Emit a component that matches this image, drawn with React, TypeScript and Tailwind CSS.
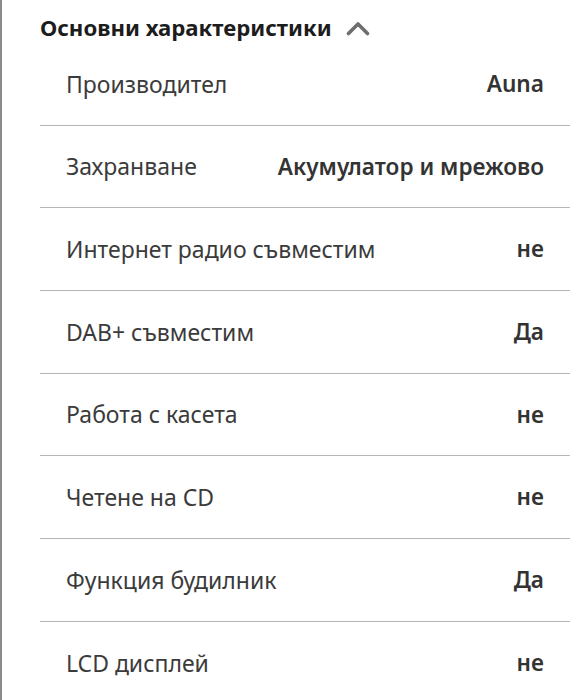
import React from "react"

type Spec = { label: string; value: string }

const specs: Spec[] = [
  { label: "Производител", value: "Auna" },
  { label: "Захранване", value: "Акумулатор и мрежово" },
  { label: "Интернет радио съвместим", value: "не" },
  { label: "DAB+ съвместим", value: "Да" },
  { label: "Работа с касета", value: "не" },
  { label: "Четене на CD", value: "не" },
  { label: "Функция будилник", value: "Да" },
  { label: "LCD дисплей", value: "не" },
]

const ChevronUp: React.FC = () => (
  <svg width="24" height="15" viewBox="0 0 24 15" fill="none">
    <path d="M2.5 12.5 L12 3 L21.5 12.5" stroke="#6e6e6e" strokeWidth="3.6" strokeLinecap="round" strokeLinejoin="round" />
  </svg>
)

const App: React.FC = () => {
  return (
    <div className="w-[587px] h-[700px] overflow-hidden bg-white border-l-2 border-[#8a8a8a] font-['Noto_Sans',sans-serif]">
      <div className="pl-[38px] pr-[17px]">
        <div className="h-[43px] pt-[14px] flex items-start">
          <div className="flex items-center gap-[14px] h-[28px]">
            <h2 className="text-[22.2px] leading-[28px] font-bold text-[#1c1c1c]">Основни характеристики</h2>
            <ChevronUp />
          </div>
        </div>

        {specs.map((s, i) => (
          <div
            key={s.label}
            className={
              i < specs.length - 1
                ? "h-[82.7px] px-[26px] flex items-center justify-between border-b border-[#b5b5b5]"
                : "h-[82.7px] px-[26px] flex items-center justify-between"
            }
          >
            <span className="text-[23px] text-[#3b3b3b]">{s.label}</span>
            <span className="text-[22.6px] font-semibold text-[#333333]">{s.value}</span>
          </div>
        ))}
      </div>
    </div>
  )
}

export default App
